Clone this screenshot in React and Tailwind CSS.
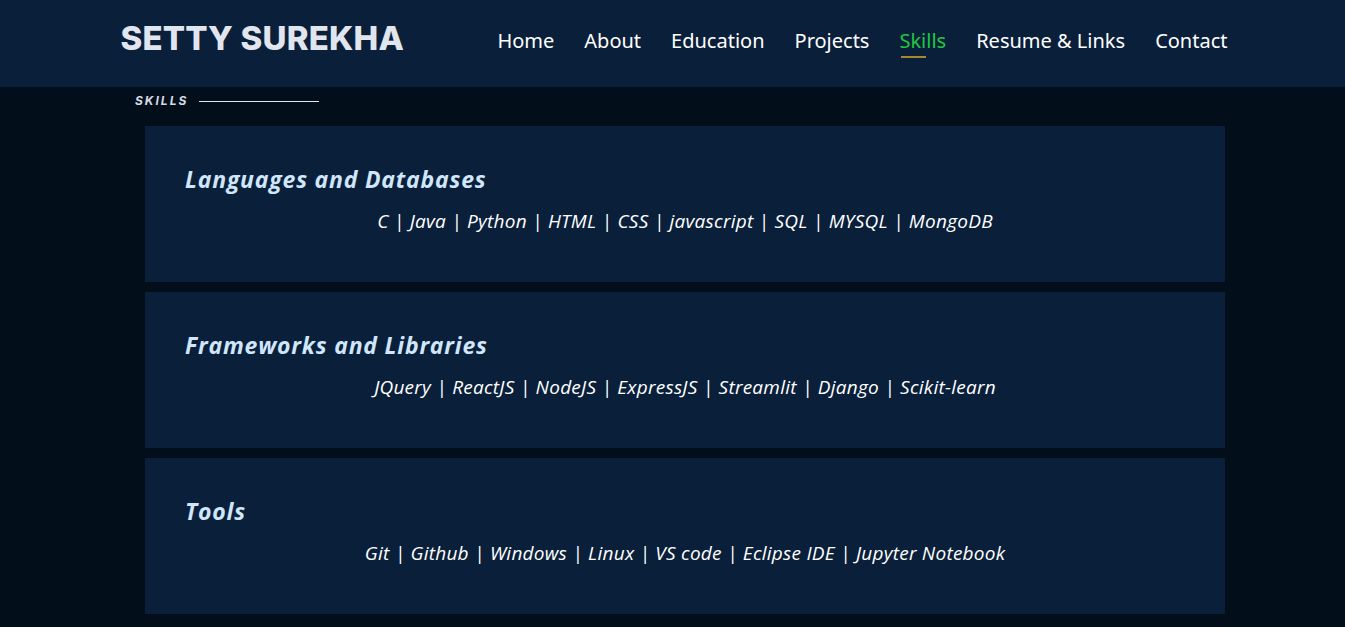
const navItems = ['Home', 'About', 'Education', 'Projects', 'Skills', 'Resume & Links', 'Contact'];

const skillGroups = [
  {
    title: 'Languages and Databases',
    items: 'C | Java | Python | HTML | CSS | javascript | SQL | MYSQL | MongoDB'
  },
  {
    title: 'Frameworks and Libraries',
    items: 'JQuery | ReactJS | NodeJS | ExpressJS | Streamlit | Django | Scikit-learn'
  },
  {
    title: 'Tools',
    items: 'Git | Github | Windows | Linux | VS code | Eclipse IDE | Jupyter Notebook'
  }
];

export default function App() {
  return (
    <div className="min-h-[627px] bg-[#020e1a]">
      <header className="h-[87px] bg-[#0a1f3a]">
        <div className="mx-auto flex h-full w-[1110px] items-center justify-between pb-[9px] pl-[3px]">
          <h1 className="font-['Inter',sans-serif] text-[33px] font-extrabold tracking-[0.2px] text-[#e1e6ee]">
            SETTY SUREKHA
          </h1>
          <nav className="flex items-center gap-[30px] pt-[4px] font-['Noto_Sans',sans-serif] text-[20px]">
            {navItems.map((item) => (
              <div key={item} className="relative">
                <span className={item === 'Skills' ? 'text-[#1fc93f]' : 'text-white'}>{item}</span>
                {item === 'Skills' && (
                  <span className="absolute left-[2px] top-[30px] h-[2px] w-[25px] bg-[#a8872d]" />
                )}
              </div>
            ))}
          </nav>
        </div>
      </header>

      <section className="ml-[145px] w-[1080px]">
        <div className="-ml-[10px] flex h-[30px] items-center gap-[11px] pb-[2px]">
          <span className="font-['Inter',sans-serif] text-[12px] font-bold italic tracking-[2px] text-[#d6dbe2]">
            SKILLS
          </span>
          <span className="h-px w-[120px] bg-[#e5e7eb]" />
        </div>
        <div className="mt-[9px] flex flex-col gap-[10px]">
          {skillGroups.map((group) => (
            <div key={group.title} className="h-[156px] bg-[#0a1f3a] px-[40px] pt-[37px]">
              <h2 className="font-['Open_Sans',sans-serif] text-[23px] font-bold italic leading-[32px] tracking-[0.8px] text-[#d0e6fb]">
                {group.title}
              </h2>
              <p className="mt-[12px] text-center font-['Open_Sans',sans-serif] text-[19px] italic leading-[28px] tracking-[0.25px] text-white">
                {group.items}
              </p>
            </div>
          ))}
        </div>
      </section>
    </div>
  );
}
